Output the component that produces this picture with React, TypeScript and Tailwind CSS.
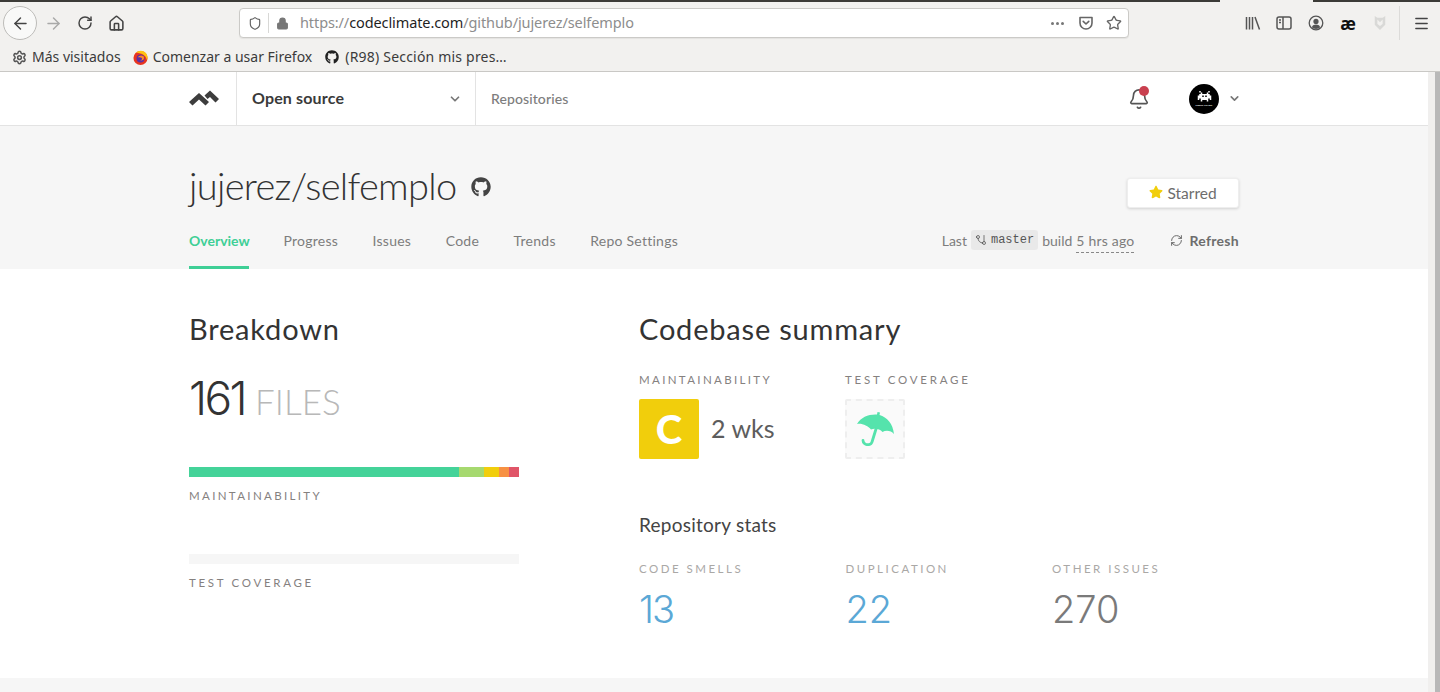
import { ArrowLeft, ArrowRight, Bell, ChevronDown, GitBranch, Home, Lock, Menu, RefreshCw, RotateCw, Settings, Shield, Star } from "lucide-react";
import { FaGithub, FaStar } from "react-icons/fa";

const tabs = ["Progress", "Issues", "Code", "Trends", "Repo Settings"];

function Label({ children, className = "" }: { children: string; className?: string }) {
    return <div className={`text-[11.5px] leading-[14px] uppercase text-[#85817f] ${className}`}>{children}</div>;
}

function Stat({ label, value, color }: { label: string; value: string; color: string }) {
    return (
        <div className="w-[206.5px]">
            <div className="text-[11.5px] leading-[14px] tracking-[2.5px] uppercase text-[#aaa8a6]">{label}</div>
            <div className={`mt-[10px] font-['Inter',sans-serif] text-[38px] leading-[46px] font-light ${color}`}>{value}</div>
        </div>
    );
}

function BrowserChrome() {
    return (
        <div className="h-[72px] shrink-0 bg-[#f2f1ef] border-b border-[#c9c8c5] font-['Noto_Sans',sans-serif] text-[#3b3b3b]">
            <div className="h-[2px] flex">
                <div className="w-[1220px] bg-[#3c3b37]" />
                <div className="w-[93px]" />
                <div className="flex-1 bg-[#3c3b37]" />
            </div>
            <div className="h-[41px] flex items-center pt-[1px]">
                <div className="ml-[3px] w-[34px] h-[34px] rounded-full border border-[#bdbcb9] bg-[#f9f9f8] flex items-center justify-center">
                    <ArrowLeft className="w-[19px] h-[19px] text-[#444]" strokeWidth={1.8} />
                </div>
                <ArrowRight className="ml-[7px] w-[19px] h-[19px] text-[#a9a9a8]" strokeWidth={1.8} />
                <RotateCw className="ml-[14px] w-[16px] h-[16px] text-[#444]" strokeWidth={2.2} />
                <Home className="ml-[15px] w-[17px] h-[17px] text-[#444]" strokeWidth={2.2} />
                <div className="ml-[114px] w-[890px] h-[30px] rounded-[4px] border border-[#cbcac7] bg-white flex items-center shadow-[0_1px_1px_rgba(0,0,0,0.06)]">
                    <Shield className="ml-[8px] w-[14px] h-[15px] text-[#666]" strokeWidth={2} />
                    <div className="ml-[6px] w-px h-[20px] bg-[#d8d8d6]" />
                    <Lock className="ml-[7px] w-[13px] h-[13px] text-[#777] fill-[#777]" strokeWidth={2} />
                    <div className="ml-[11px] text-[14.5px] tracking-[-0.1px] text-[#8d8d8d]">
                        https://<span className="text-[#1f1f1f]">codeclimate.com</span>/github/jujerez/selfemplo
                    </div>
                    <div className="ml-auto flex items-center">
                        <div className="flex gap-[2px]">
                            <div className="w-[3px] h-[3px] rounded-full bg-[#777]" />
                            <div className="w-[3px] h-[3px] rounded-full bg-[#777]" />
                            <div className="w-[3px] h-[3px] rounded-full bg-[#777]" />
                        </div>
                        <svg viewBox="0 0 16 16" className="ml-[14px] w-[16px] h-[16px] text-[#666]" fill="none" stroke="currentColor" strokeWidth="1.6">
                            <path d="M2 2.5h12v5.5a6 6 0 0 1-12 0z" strokeLinejoin="round" />
                            <path d="M5.2 6.4 8 9l2.8-2.6" strokeLinecap="round" strokeLinejoin="round" />
                        </svg>
                        <Star className="ml-[12px] mr-[6px] w-[16px] h-[16px] text-[#666]" strokeWidth={2} />
                    </div>
                </div>
                <svg viewBox="0 0 16 16" className="ml-[116px] w-[16px] h-[16px] text-[#555]" fill="none" stroke="currentColor" strokeWidth="1.5">
                    <path d="M1.5 2v12.5M4.5 2v12.5M7.5 2v12.5M10 2l4.5 12.5" />
                </svg>
                <svg viewBox="0 0 16 16" className="ml-[15px] w-[16px] h-[16px] text-[#555]" fill="none" stroke="currentColor" strokeWidth="1.5">
                    <rect x="1" y="2" width="14" height="12" rx="2" />
                    <path d="M7 2v12M3 5h2M3 7.5h2" />
                </svg>
                <svg viewBox="0 0 16 16" className="ml-[16px] w-[16px] h-[16px] text-[#555]">
                    <circle cx="8" cy="8" r="6.8" fill="none" stroke="currentColor" strokeWidth="1.3" />
                    <circle cx="8" cy="6.4" r="2.6" fill="currentColor" />
                    <path d="M3.8 12.2c1-2 2.5-2.6 4.2-2.6s3.2.6 4.2 2.6a6 6 0 0 1-8.4 0z" fill="currentColor" />
                </svg>
                <span className="ml-[15px] w-[18px] text-center text-[17px] leading-none font-bold text-[#111]">æ</span>
                <svg viewBox="0 0 16 18" className="ml-[16px] w-[14px] h-[16px] text-[#d9d9d7]" fill="currentColor">
                    <path d="M2 1l3 2h6l3-2v10l-6 6-6-6z" />
                    <path d="M5 5v5l3 2.5L11 10V5L8 8z" fill="#f2f1ef" />
                </svg>
                <div className="ml-[12px] w-px h-[34px] bg-[#dcdbd9]" />
                <Menu className="ml-[13px] w-[17px] h-[17px] text-[#444]" strokeWidth={2} />
            </div>
            <div className="h-[26px] pt-[2px] flex items-center text-[14px] leading-none">
                <Settings className="ml-[12px] w-[15px] h-[15px] text-[#555]" strokeWidth={2.4} />
                <span className="ml-[5px]">Más visitados</span>
                <svg viewBox="0 0 16 16" className="ml-[12px] w-[15px] h-[15px]">
                    <circle cx="8" cy="8.5" r="7.5" fill="#e8341f" />
                    <path d="M3 3c3-3 8-3 11 .5 1.5 2 2 5 1 7.500C14 8 13 6 11 5 8.500 3.500 5 3 3 3z" fill="#ffc312" />
                    <circle cx="8" cy="9" r="4.2" fill="#5b2ea6" />
                    <path d="M5 8c1-2 4-3 6-1.500 1 1 1 3 0 4-1 .8-2.500 1-3.500.5 1.500 0 2.500-1 2-2.500C8.500 8 6.500 7.500 5 8z" fill="#ff8a1e" />
                </svg>
                <span className="ml-[5px]">Comenzar a usar Firefox</span>
                <FaGithub className="ml-[13px] w-[14px] h-[14px] text-[#222]" />
                <span className="ml-[6px] tracking-[0.2px]">(R98) Sección mis pres…</span>
            </div>
        </div>
    );
}

function Invader() {
    return (
        <div className="w-[30px] h-[30px] rounded-full bg-black flex flex-col items-center justify-center">
            <svg viewBox="0 0 11 8" className="w-[17px] h-[12px]" fill="#fff">
                <path d="M2 0h1v1h1v1h3V1h1V0h1v1H8v1h1v1h1v3H9V5H8v2H7V6H4v1H3V5H2v1H1V3h1V2h1V1H2zM4 3v1h1V3zm2 0v1h1V3z" fillRule="evenodd" />
            </svg>
            <span className="mt-[1px] text-[2.5px] leading-[3px] font-bold text-white tracking-[0.05em]">PRESS START</span>
        </div>
    );
}

function TopNav() {
    return (
        <div className="h-[54px] shrink-0 bg-white border-b border-[#e3e3e3] pl-[189px] pr-[189px] flex font-['Lato',sans-serif]">
            <div className="w-[47px] flex items-center">
                <svg viewBox="0 0 31 17" className="w-[31px] h-[17px] text-[#3d3d3d]" fill="currentColor">
                    <path d="M0 12 10 3l10 9-3.500 3.500L10 9.500 3.500 15.500z" />
                    <path d="M15.500 5.500 21 .5l9 8.500-3.500 3.500L21 7l-2.500 2z" />
                </svg>
            </div>
            <div className="w-[240px] border-x border-[#e3e3e3] pl-[15px] pr-[13px] flex items-center justify-between">
                <span className="text-[16px] font-bold text-[#3a3a3a] mb-[1px] tracking-[0.15px]">Open source</span>
                <ChevronDown className="w-[14px] h-[14px] text-[#777]" strokeWidth={3} />
            </div>
            <div className="pl-[15px] flex items-center text-[14px] tracking-[0.1px] text-[#7d7d7d] font-medium">Repositories</div>
            <div className="ml-auto flex items-center mr-[-2px]">
                <div className="relative w-[24px] h-[28px] flex items-center justify-center ml-[1px] mt-[1px]">
                    <Bell className="w-[22px] h-[22px] text-[#555]" strokeWidth={1.8} />
                    <div className="absolute right-[2px] top-[1px] w-[10px] h-[10px] rounded-full bg-[#c9404f]" />
                </div>
                <div className="ml-[38px]"><Invader /></div>
                <ChevronDown className="ml-[9px] w-[13px] h-[13px] text-[#777]" strokeWidth={3} />
            </div>
        </div>
    );
}

function RepoHeader() {
    return (
        <div className="h-[143px] shrink-0 bg-[#f6f6f6] px-[189px] flex flex-col font-['Lato',sans-serif]">
            <div className="flex justify-between">
                <div className="mt-[34px] flex items-center h-[50px]">
                    <h1 className="text-[38px] leading-[50px] font-light text-[#333] tracking-[-0.7px]">jujerez/selfemplo</h1>
                    <FaGithub className="ml-[15px] mt-[4px] w-[20px] h-[20px] text-[#444]" />
                </div>
                <div className="mt-[52px] w-[112px] h-[30px] pt-[1px] rounded-[3px] bg-white border border-[#eeeeee] shadow-[0_1px_3px_rgba(0,0,0,0.15)] flex items-center justify-center gap-[4px] text-[15.5px] text-[#6d6d6d]">
                    <FaStar className="w-[14px] h-[14px] text-[#f1ce0c] mb-[3px]" />
                    Starred
                </div>
            </div>
            <div className="mt-auto flex justify-between h-[41px] text-[14px] text-[#7d7d7d]">
                <div className="flex gap-[34.5px]">
                    <div className="w-[60px] h-[41px] border-b-[3px] border-[#3fcf96] pt-[2px] font-bold text-[#3fcf96]">Overview</div>
                    {tabs.map((tab) => (
                        <div key={tab} className="pt-[2px] tracking-[0.25px]">{tab}</div>
                    ))}
                </div>
                <div className="flex items-start">
                    <span className="pt-[2px]">Last</span>
                    <span className="ml-[4px] mt-[2px] h-[20px] px-[4px] rounded-[3px] bg-[#e9e9e9] flex items-center gap-[4px] font-['Liberation_Mono',monospace] text-[12px] text-[#555]">
                        <GitBranch className="w-[12px] h-[12px] scale-x-[-1]" strokeWidth={1.6} />
                        master
                    </span>
                    <span className="ml-[4px] pt-[2px]">build</span>
                    <span className="ml-[4px] pt-[2px] h-[25px] border-b border-dashed border-[#888] tracking-[0.2px]">5 hrs ago</span>
                    <RefreshCw className="ml-[36px] mt-[6px] w-[13px] h-[13px] text-[#666]" strokeWidth={1.8} />
                    <span className="ml-[6px] pt-[2px] font-bold text-[#6d6d6d] tracking-[0.3px]">Refresh</span>
                </div>
            </div>
        </div>
    );
}

function Breakdown() {
    return (
        <div className="w-[450px]">
            <h2 className="text-[29px] leading-[34px] tracking-[0.8px] text-[#333]">Breakdown</h2>
            <div className="mt-[22px] h-[60px] flex items-baseline gap-[10px]">
                <span className="font-['Inter',sans-serif] text-[46px] leading-[60px] font-light tracking-[-2.6px] text-[#333]">161</span>
                <span className="text-[35px] leading-[60px] font-light text-[#b8b8b8]">FILES</span>
            </div>
            <div className="mt-[39px] w-[330px] h-[10px] flex">
                <div className="w-[270px] bg-[#44d399]" />
                <div className="w-[25px] bg-[#a6d96f]" />
                <div className="w-[15px] bg-[#f1ce0c]" />
                <div className="w-[10px] bg-[#f79143]" />
                <div className="w-[10px] bg-[#e05568]" />
            </div>
            <Label className="mt-[12px] tracking-[2.35px]">Maintainability</Label>
            <div className="mt-[51px] w-[330px] h-[10px] bg-[#f6f6f6]" />
            <Label className="mt-[12px] tracking-[2.7px]">Test coverage</Label>
        </div>
    );
}

function Summary() {
    return (
        <div className="flex-1">
            <h2 className="text-[29px] leading-[34px] tracking-[0.8px] text-[#333]">Codebase summary</h2>
            <div className="mt-[27px] flex">
                <div className="w-[206px]">
                    <Label className="tracking-[2.35px]">Maintainability</Label>
                    <div className="mt-[12px] flex items-center gap-[12px]">
                        <div className="w-[60px] h-[60px] rounded-[2px] bg-[#f1ce0c] flex items-center justify-center text-[40px] leading-none font-black text-white">C</div>
                        <span className="text-[25px] text-[#5d5d5d]">2 wks</span>
                    </div>
                </div>
                <div>
                    <Label className="tracking-[2.75px]">Test coverage</Label>
                    <div className="mt-[12px] w-[60px] h-[60px] rounded-[2px] border-2 border-dashed border-[#eeeeee] bg-[#fafafa] flex items-center justify-center">
                        <svg viewBox="0 0 37 34" className="w-[37px] h-[34px] text-[#55e3ac]">
                            <path d="M0 12C4 5 12 2 20 2.500l.5-2.500 2.500.5-.5 2.500C30 5 36 12 37 22c-3-3.500-8-4-11.500-2-2.500-3-8-4-11.500-2.500C11 14 5 11 0 12z" fill="currentColor" />
                            <path d="M19 17l-4 13c-.8 3-5 3.500-7.500 1.500-1-1-1.500-2-1.500-3" fill="none" stroke="currentColor" strokeWidth="2.800" strokeLinecap="round" />
                        </svg>
                    </div>
                </div>
            </div>
            <h3 className="mt-[53px] text-[19px] leading-[26px] tracking-[0.25px] text-[#444]">Repository stats</h3>
            <div className="mt-[24px] flex">
                <Stat label="Code smells" value="13" color="text-[#5ba8d6] tracking-[-2px]" />
                <Stat label="Duplication" value="22" color="text-[#5ba8d6]" />
                <Stat label="Other issues" value="270" color="text-[#7a7a7a]" />
            </div>
        </div>
    );
}

export default function App() {
    return (
        <div className="w-[1440px] h-[692px] overflow-hidden flex flex-col bg-white">
            <BrowserChrome />
            <div className="flex-1 flex min-h-0">
                <div className="w-[1428px] flex flex-col">
                    <TopNav />
                    <RepoHeader />
                    <div className="flex-1 flex pl-[189px] pt-[43px] font-['Lato',sans-serif]">
                        <Breakdown />
                        <Summary />
                    </div>
                    <div className="h-[14px] shrink-0 bg-[#f6f6f6]" />
                </div>
                <div className="w-[7px] bg-[#f0efee]" />
                <div className="w-[5px] bg-[#b8b8b8]" />
            </div>
        </div>
    );
}
